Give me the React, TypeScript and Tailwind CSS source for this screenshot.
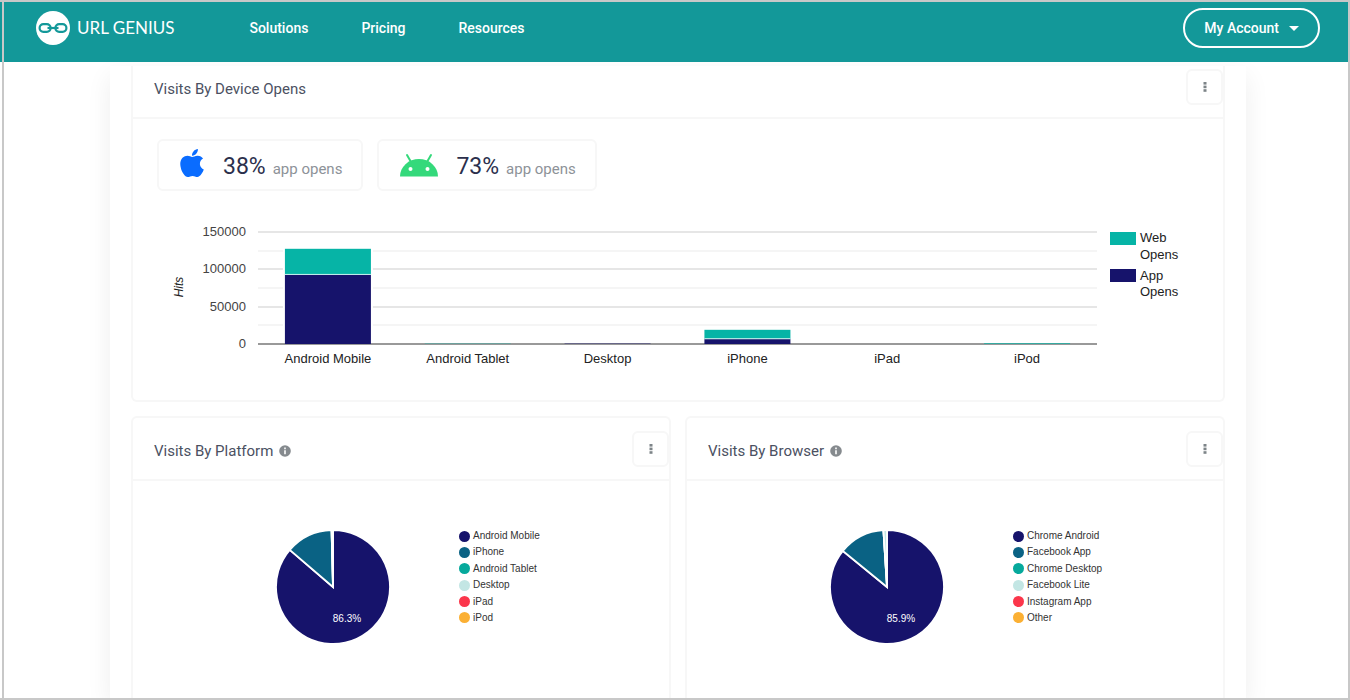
import React from "react";
import { FaApple } from "react-icons/fa";

const NAV_LINKS = ["Solutions", "Pricing", "Resources"];

const DEVICES = [
    { name: "Android Mobile", app: 92500, web: 35000 },
    { name: "Android Tablet", app: 0, web: 400 },
    { name: "Desktop", app: 500, web: 0 },
    { name: "iPhone", app: 6500, web: 12500 },
    { name: "iPad", app: 0, web: 0 },
    { name: "iPod", app: 0, web: 900 },
];

const COLORS = ["#16136b", "#0a6284", "#06a99c", "#c3e6e4", "#fb364b", "#fbb034"];

const PLATFORMS = ["Android Mobile", "iPhone", "Android Tablet", "Desktop", "iPad", "iPod"];
const BROWSERS = ["Chrome Android", "Facebook App", "Chrome Desktop", "Facebook Lite", "Instagram App", "Other"];

const Logo = () => (
    <a href="#" className="flex items-center gap-[7px] text-white">
        <svg width="34" height="34" viewBox="0 0 34 34" aria-hidden="true">
            <circle cx="17" cy="17" r="17" fill="#fff" />
            <g fill="none" stroke="#139899" strokeWidth="2.2">
                <rect x="3.6" y="13.2" width="11" height="7.6" rx="3.8" />
                <rect x="19.4" y="13.2" width="11" height="7.6" rx="3.8" />
                <path d="M11.5 17h11" />
            </g>
        </svg>
        <span className="font-[Lato,sans-serif] text-[17px] leading-6 whitespace-nowrap">URL GENIUS</span>
    </a>
);

const AndroidIcon = () => (
    <svg width="38" height="24" viewBox="0 0 38 24" aria-hidden="true">
        <path d="M0 23.5a19 17.5 0 0 1 38 0z" fill="#34d97b" />
        <path d="M7 2l4 7M31 2l-4 7" stroke="#34d97b" strokeWidth="2" strokeLinecap="round" />
        <circle cx="10.5" cy="16" r="2" fill="#fff" />
        <circle cx="27.5" cy="16" r="2" fill="#fff" />
    </svg>
);

const InfoIcon = () => (
    <svg width="12" height="12" viewBox="0 0 12 12" aria-hidden="true">
        <circle cx="6" cy="6" r="5.8" fill="#858a8e" />
        <path d="M6 2.6v1.6M6 5.2v4" stroke="#fff" strokeWidth="1.6" />
    </svg>
);

const CardHeader = ({ title, info, className }: { title: string; info?: boolean; className: string }) => (
    <div className={`flex items-center justify-between border-b-2 border-[#f7f7f7] pb-3 pl-[21px] ${className}`}>
        <div className="flex items-center gap-[6px] pt-1">
            <h2 className="text-[15px] leading-5 text-[#4b5162]">{title}</h2>
            {info && <InfoIcon />}
        </div>
        <button
            type="button"
            aria-label="More options"
            className="flex h-9 w-[37px] items-center justify-center rounded-md border-2 border-[#f7f7f7]"
        >
            <svg width="4" height="12" viewBox="0 0 4 12" fill="#7d8488" aria-hidden="true">
                <rect x="0.5" y="1" width="3" height="2.6" />
                <rect x="0.5" y="4.6" width="3" height="2.6" />
                <rect x="0.5" y="8.2" width="3" height="2.6" />
            </svg>
        </button>
    </div>
);

const Stat = ({ value, icon, className }: { value: string; icon: React.ReactNode; className: string }) => (
    <div className={`flex h-[52px] items-center rounded-md border-2 border-[#f7f7f7] pr-[19px] ${className}`}>
        {icon}
        <p className="flex items-baseline gap-[7px] pt-1">
            <span className="text-[23px] leading-7 text-[#2b2f4c]">{value}</span>
            <span className="text-[15px] leading-5 text-[#8d9298]">app opens</span>
        </p>
    </div>
);

const DeviceChart = () => {
    const left = 125;
    const right = 964;
    const base = 153;
    const step = (right - left) / DEVICES.length;
    const toY = (value: number) => base - (value * 112) / 150000;

    return (
        <svg
            viewBox="0 0 1090 209"
            className="block w-full font-[Liberation_Sans,Arial,sans-serif] text-[13px]"
            fill="#444"
            role="img"
            aria-label="Visits by device"
        >
            {[25000, 75000, 125000].map((v) => (
                <rect key={v} x={left} y={Math.round(toY(v)) - 1} width={right - left} height="2" fill="#f5f5f5" />
            ))}
            {[50000, 100000, 150000].map((v) => (
                <rect key={v} x={left} y={Math.round(toY(v)) - 1} width={right - left} height="2" fill="#e6e6e6" />
            ))}
            {[0, 50000, 100000, 150000].map((v) => (
                <text key={v} x="113" y={Math.round(toY(v)) + 4} textAnchor="end">{v}</text>
            ))}
            <text transform="translate(50 96) rotate(-90)" textAnchor="middle" className="text-[12px] italic" fill="#222">
                Hits
            </text>
            <rect x={left} y={base - 1} width={right - left} height="2" fill="#999" />
            {DEVICES.map((device, i) => {
                const center = left + step * (i + 0.5);
                const appY = toY(device.app);
                const webY = toY(device.app + device.web);
                return (
                    <g key={device.name}>
                        {device.app > 1000 && (
                            <rect x={center - 45} y={webY - 2} width="90" height={base - webY + 1} fill="#fff" />
                        )}
                        <rect x={center - 43} y={webY} width="86" height={appY - webY} fill="#06b4a6" />
                        <rect x={center - 43} y={appY} width="86" height={base - appY} fill="#16136b" />
                        {device.app > 1000 && (
                            <rect x={center - 43} y={appY - 1} width="86" height="1" fill="#c9efec" />
                        )}
                        <text x={center} y="172" textAnchor="middle" fill="#222">{device.name}</text>
                    </g>
                );
            })}
            <rect x="977" y="41" width="26" height="13" fill="#06b4a6" />
            <text fill="#222">
                <tspan x="1007" y="51">Web</tspan>
                <tspan x="1007" y="68">Opens</tspan>
            </text>
            <rect x="977" y="78" width="26" height="13" fill="#16136b" />
            <text fill="#222">
                <tspan x="1007" y="89">App</tspan>
                <tspan x="1007" y="105">Opens</tspan>
            </text>
        </svg>
    );
};

// slices are given in percent, the first one starts at 12 o'clock
const Pie = ({ slices }: { slices: number[] }) => {
    const point = (percent: number) => {
        const angle = (percent / 100) * Math.PI * 2;
        return `${57 + 57 * Math.sin(angle)} ${57 - 57 * Math.cos(angle)}`;
    };
    let start = 0;

    return (
        <svg width="114" height="114" viewBox="0 0 114 114" role="img" aria-label={`${slices[0]}%`}>
            {slices.map((slice, i) => {
                const from = start;
                start += slice;
                return (
                    <path
                        key={i}
                        d={`M57 57L${point(from)}A57 57 0 ${slice > 50 ? 1 : 0} 1 ${point(start)}z`}
                        fill={COLORS[i]}
                        stroke="#fff"
                        strokeWidth="1.8"
                    />
                );
            })}
            <text x="71" y="92" textAnchor="middle" fill="#fff" className="font-[Liberation_Sans,Arial,sans-serif] text-[10px]">
                {slices[0]}%
            </text>
        </svg>
    );
};

const PieCard = ({ title, slices, labels }: { title: string; slices: number[]; labels: string[] }) => (
    <section className="rounded-t-md border-2 border-b-0 border-[#f7f7f7]">
        <CardHeader title={title} info className="pt-[13px]" />
        <div className="flex items-start gap-[69px] pt-[49px] pl-[143px]">
            <Pie slices={slices} />
            <ul className="flex h-[94px] flex-col justify-between font-[Liberation_Sans,Arial,sans-serif] text-[10px] leading-3 text-[#333]">
                {labels.map((label, i) => (
                    <li key={label} className="flex items-center gap-[3px] whitespace-nowrap">
                        <span className="size-[11px] rounded-full" style={{ backgroundColor: COLORS[i] }} />
                        {label}
                    </li>
                ))}
            </ul>
        </div>
    </section>
);

const App = () => {
    return (
        <div className="flex min-h-screen flex-col border-t-2 border-r-2 border-b-2 border-[#c8c8c8] bg-white font-[Roboto,sans-serif]">
            <header className="bg-[#139899] pl-[2px]">
                <div className="flex items-start justify-between border-l-2 border-[#c8c8c8] pt-[6px] pr-7 pb-[14px] pl-8">
                    <div className="flex h-10 items-center gap-[75px]">
                        <Logo />
                        <nav className="flex gap-[53px] text-[14px] leading-5 font-medium text-white">
                            {NAV_LINKS.map((link) => (
                                <a key={link} href="#">{link}</a>
                            ))}
                        </nav>
                    </div>
                    <button
                        type="button"
                        className="flex h-10 items-center gap-[10px] rounded-full border-2 border-white px-[19px] text-[14px] font-medium text-white"
                    >
                        My Account
                        <svg width="10" height="5" viewBox="0 0 10 5" fill="#fff" aria-hidden="true">
                            <path d="M0 0h10L5 5z" />
                        </svg>
                    </button>
                </div>
            </header>

            <div className="flex flex-1 flex-col pl-[2px]">
                <div className="flex flex-1 flex-col overflow-hidden border-l-2 border-[#c8c8c8] pt-1">
                    <main className="mr-[102px] ml-[106px] flex flex-1 flex-col gap-[14px] px-[21px] shadow-[0_10px_24px_rgba(0,0,0,0.07)]">
                        <section className="rounded-b-md border-2 border-t-0 border-[#f7f7f7]">
                            <CardHeader title="Visits By Device Opens" className="pt-[3px]" />
                            <div className="flex gap-[14px] pt-5 pl-6">
                                <Stat
                                    value="38%"
                                    icon={<FaApple className="mr-[15px] mb-1 size-8 text-[#0a6cff]" />}
                                    className="pl-[17px]"
                                />
                                <Stat
                                    value="73%"
                                    icon={<span className="mr-[18px]"><AndroidIcon /></span>}
                                    className="pl-[21px]"
                                />
                            </div>
                            <DeviceChart />
                        </section>

                        <div className="grid flex-1 grid-cols-2 gap-[14px]">
                            <PieCard title="Visits By Platform" slices={[86.3, 13.3, 0, 0.4]} labels={PLATFORMS} />
                            <PieCard title="Visits By Browser" slices={[85.9, 13.1, 0, 1]} labels={BROWSERS} />
                        </div>
                    </main>
                </div>
            </div>
        </div>
    );
};

export default App;
